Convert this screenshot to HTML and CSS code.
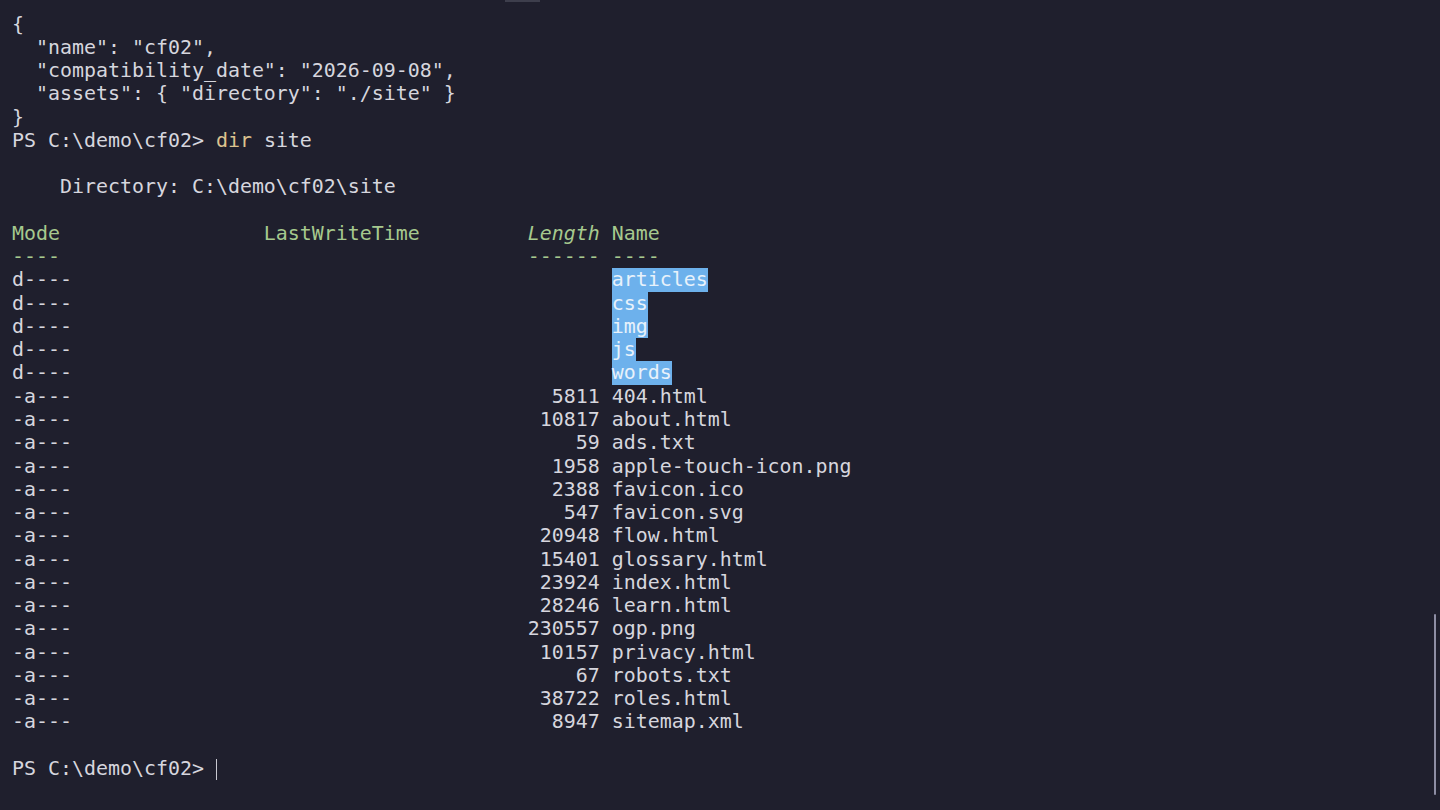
FILE: index.html
```html
<!DOCTYPE html>
<html lang="en">
<head>
<meta charset="utf-8">
<title>Terminal</title>
<link rel="stylesheet" href="styles.css">
</head>
<body>
<div class="term">
  <div class="tab-mark"></div>
  <div class="scroll-thumb"></div>
  <div class="screen">
    <div class="ln">{</div>
    <div class="ln">  "name": "cf02",</div>
    <div class="ln">  "compatibility_date": "2026-09-08",</div>
    <div class="ln">  "assets": { "directory": "./site" }</div>
    <div class="ln">}</div>
    <div class="ln">PS C:\demo\cf02&gt; <span class="cmd">dir</span> site</div>
    <div class="ln"> </div>
    <div class="ln">    Directory: C:\demo\cf02\site</div>
    <div class="ln"> </div>
    <div class="ln"><span class="hd">Mode                 LastWriteTime         <em>Length</em> Name</span></div>
    <div class="ln"><span class="hd">----                                       ------ ----</span></div>
    <div class="ln">d----                                             <span class="sel">articles</span></div>
    <div class="ln">d----                                             <span class="sel">css</span></div>
    <div class="ln">d----                                             <span class="sel">img</span></div>
    <div class="ln">d----                                             <span class="sel">js</span></div>
    <div class="ln">d----                                             <span class="sel">words</span></div>
    <div class="ln">-a---                                        5811 404.html</div>
    <div class="ln">-a---                                       10817 about.html</div>
    <div class="ln">-a---                                          59 ads.txt</div>
    <div class="ln">-a---                                        1958 apple-touch-icon.png</div>
    <div class="ln">-a---                                        2388 favicon.ico</div>
    <div class="ln">-a---                                         547 favicon.svg</div>
    <div class="ln">-a---                                       20948 flow.html</div>
    <div class="ln">-a---                                       15401 glossary.html</div>
    <div class="ln">-a---                                       23924 index.html</div>
    <div class="ln">-a---                                       28246 learn.html</div>
    <div class="ln">-a---                                      230557 ogp.png</div>
    <div class="ln">-a---                                       10157 privacy.html</div>
    <div class="ln">-a---                                          67 robots.txt</div>
    <div class="ln">-a---                                       38722 roles.html</div>
    <div class="ln">-a---                                        8947 sitemap.xml</div>
    <div class="ln"> </div>
    <div class="ln">PS C:\demo\cf02&gt; <span class="cursor"></span></div>
  </div>
</div>
</body>
</html>
```

FILE: styles.css
```css
html, body {
  margin: 0;
  padding: 0;
  background: #1f1f2d;
}

.term {
  position: relative;
  width: 1440px;
  height: 810px;
  overflow: hidden;
  background: #1f1f2d;
  color: #d6d6de;
  font-family: "DejaVu Sans Mono", "Liberation Mono", monospace;
  font-size: 19.93px;
}

.screen {
  padding: 12.5px 0 0 12px;
}

.ln {
  white-space: pre;
  height: 23.28px;
  line-height: 23.28px;
}

.cmd {
  color: #dcc38f;
}

.hd {
  color: #a6c98e;
}

.hd em {
  font-style: italic;
}

.sel {
  display: inline-block;
  height: 23.28px;
  background: #6db1ec;
  color: #e8f2fb;
  vertical-align: top;
}

.cursor {
  display: inline-block;
  width: 1px;
  height: 21px;
  background: #c8c8d0;
  vertical-align: middle;
}

.tab-mark {
  position: absolute;
  left: 505px;
  top: 0;
  width: 35px;
  height: 2px;
  background: #3d3e4c;
}

.scroll-thumb {
  position: absolute;
  left: 1434px;
  top: 614px;
  width: 2px;
  height: 181px;
  background: #8e8ea4;
  border-radius: 1px;
}
```
